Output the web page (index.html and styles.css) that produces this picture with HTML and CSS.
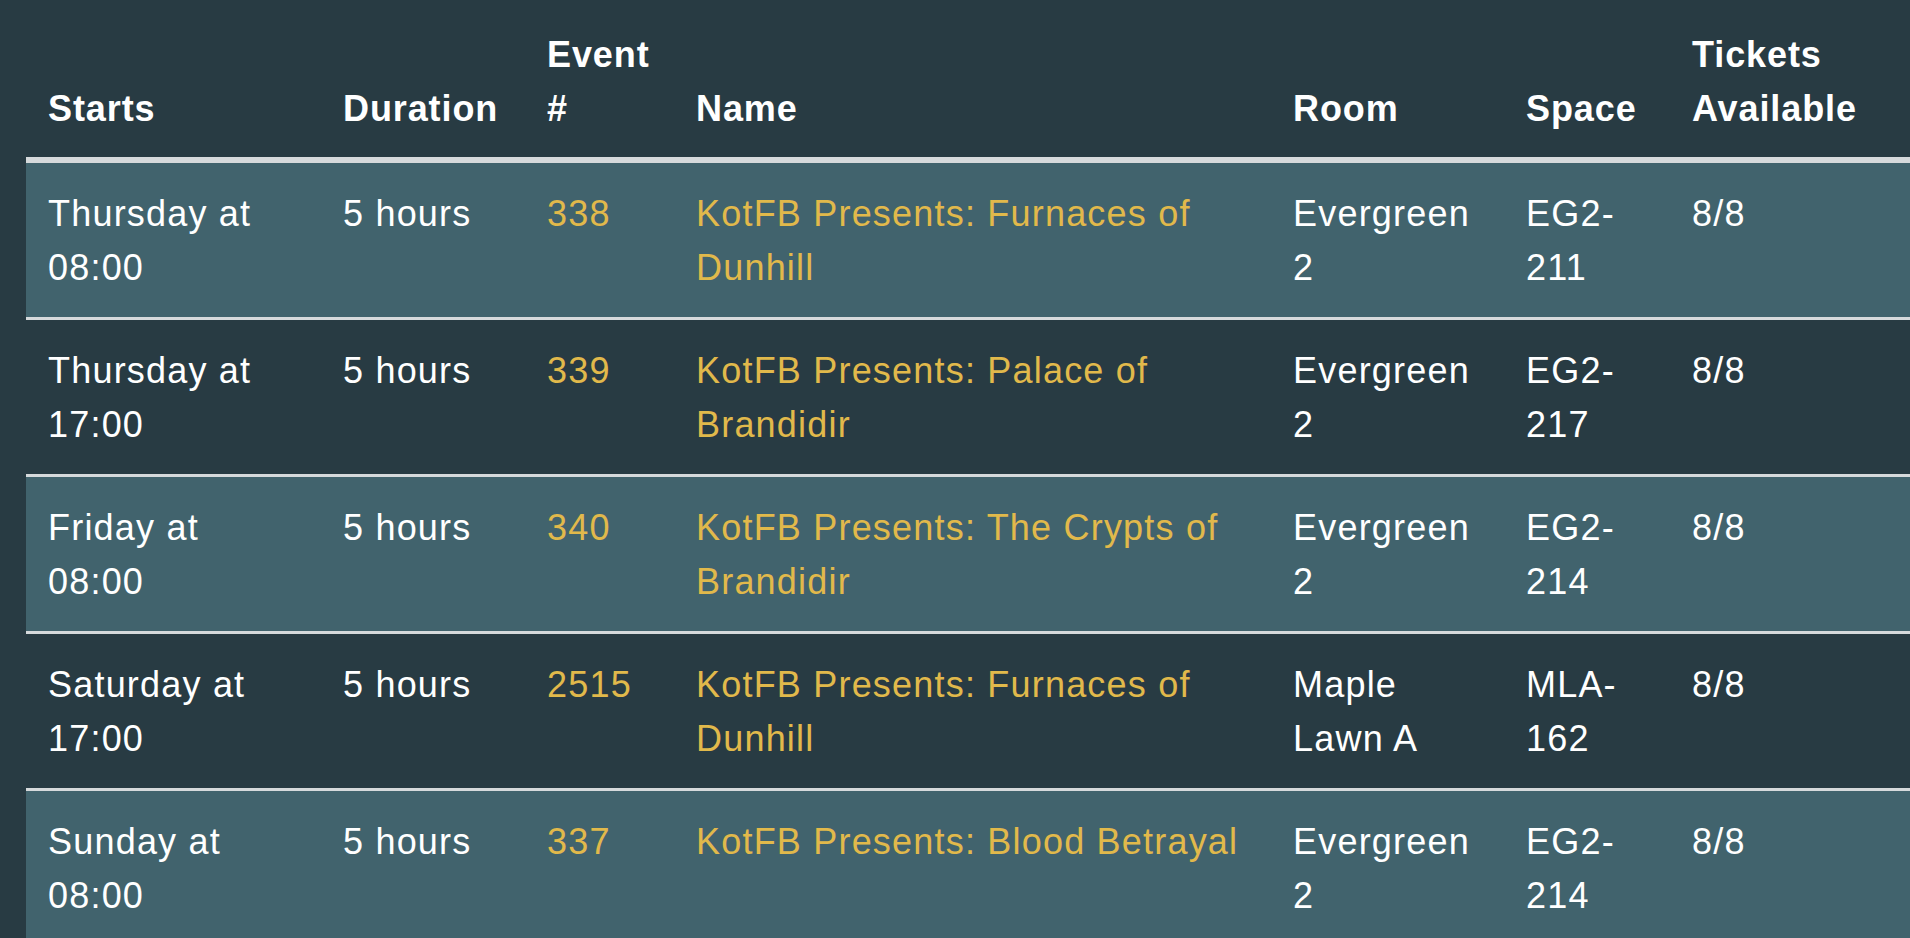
FILE: index.html
```html
<!DOCTYPE html>
<html lang="en">
<head>
<meta charset="utf-8">
<title>Events</title>
<link rel="stylesheet" href="styles.css">
</head>
<body>
<div class="page">
<table class="events">
  <colgroup>
    <col class="c-starts">
    <col class="c-duration">
    <col class="c-event">
    <col class="c-name">
    <col class="c-room">
    <col class="c-space">
    <col class="c-tickets">
  </colgroup>
  <thead>
    <tr>
      <th>Starts</th>
      <th>Duration</th>
      <th>Event #</th>
      <th>Name</th>
      <th>Room</th>
      <th>Space</th>
      <th>Tickets Available</th>
    </tr>
  </thead>
  <tbody>
    <tr class="odd">
      <td>Thursday at 08:00</td>
      <td>5 hours</td>
      <td><a class="link" href="#">338</a></td>
      <td><a class="link" href="#">KotFB Presents: Furnaces of Dunhill</a></td>
      <td>Evergreen 2</td>
      <td>EG2-211</td>
      <td>8/8</td>
    </tr>
    <tr class="even">
      <td>Thursday at 17:00</td>
      <td>5 hours</td>
      <td><a class="link" href="#">339</a></td>
      <td><a class="link" href="#">KotFB Presents: Palace of Brandidir</a></td>
      <td>Evergreen 2</td>
      <td>EG2-217</td>
      <td>8/8</td>
    </tr>
    <tr class="odd">
      <td>Friday at 08:00</td>
      <td>5 hours</td>
      <td><a class="link" href="#">340</a></td>
      <td><a class="link" href="#">KotFB Presents: The Crypts of Brandidir</a></td>
      <td>Evergreen 2</td>
      <td>EG2-214</td>
      <td>8/8</td>
    </tr>
    <tr class="even">
      <td>Saturday at 17:00</td>
      <td>5 hours</td>
      <td><a class="link" href="#">2515</a></td>
      <td><a class="link" href="#">KotFB Presents: Furnaces of Dunhill</a></td>
      <td>Maple Lawn A</td>
      <td>MLA-162</td>
      <td>8/8</td>
    </tr>
    <tr class="odd">
      <td>Sunday at 08:00</td>
      <td>5 hours</td>
      <td><a class="link" href="#">337</a></td>
      <td><a class="link" href="#">KotFB Presents: Blood Betrayal</a></td>
      <td>Evergreen 2</td>
      <td>EG2-214</td>
      <td>8/8</td>
    </tr>
  </tbody>
</table>
</div>
</body>
</html>
```

FILE: styles.css
```css
html, body {
  margin: 0;
  padding: 0;
  background: #283b43;
}

body {
  font-family: "Liberation Sans", Arial, Helvetica, sans-serif;
  color: #ffffff;
  overflow: hidden;
}

.page {
  padding: 5px 0 0 26px;
}

.events {
  width: 1884px;
  table-layout: fixed;
  border-collapse: collapse;
  font-size: 36px;
  line-height: 54px;
}

.c-starts { width: 295px; }
.c-duration { width: 204px; }
.c-event { width: 149px; }
.c-name { width: 597px; }
.c-room { width: 233px; }
.c-space { width: 166px; }
.c-tickets { width: 240px; }

.events th {
  text-align: left;
  vertical-align: bottom;
  font-weight: bold;
  letter-spacing: 0.9px;
  padding: 23px 22px 21px 22px;
  border-bottom: 6px solid #d6dadc;
  background: #283b43;
}

.events td {
  text-align: left;
  vertical-align: top;
  font-weight: normal;
  letter-spacing: 1.2px;
  padding: 24px 22px 22px 22px;
  border-bottom: 3px solid #d6dadc;
}

.events tr.odd td {
  background: #41636d;
}

.events tr.even td {
  background: #283b43;
}

.link {
  color: #e1b94b;
  text-decoration: none;
}
```
